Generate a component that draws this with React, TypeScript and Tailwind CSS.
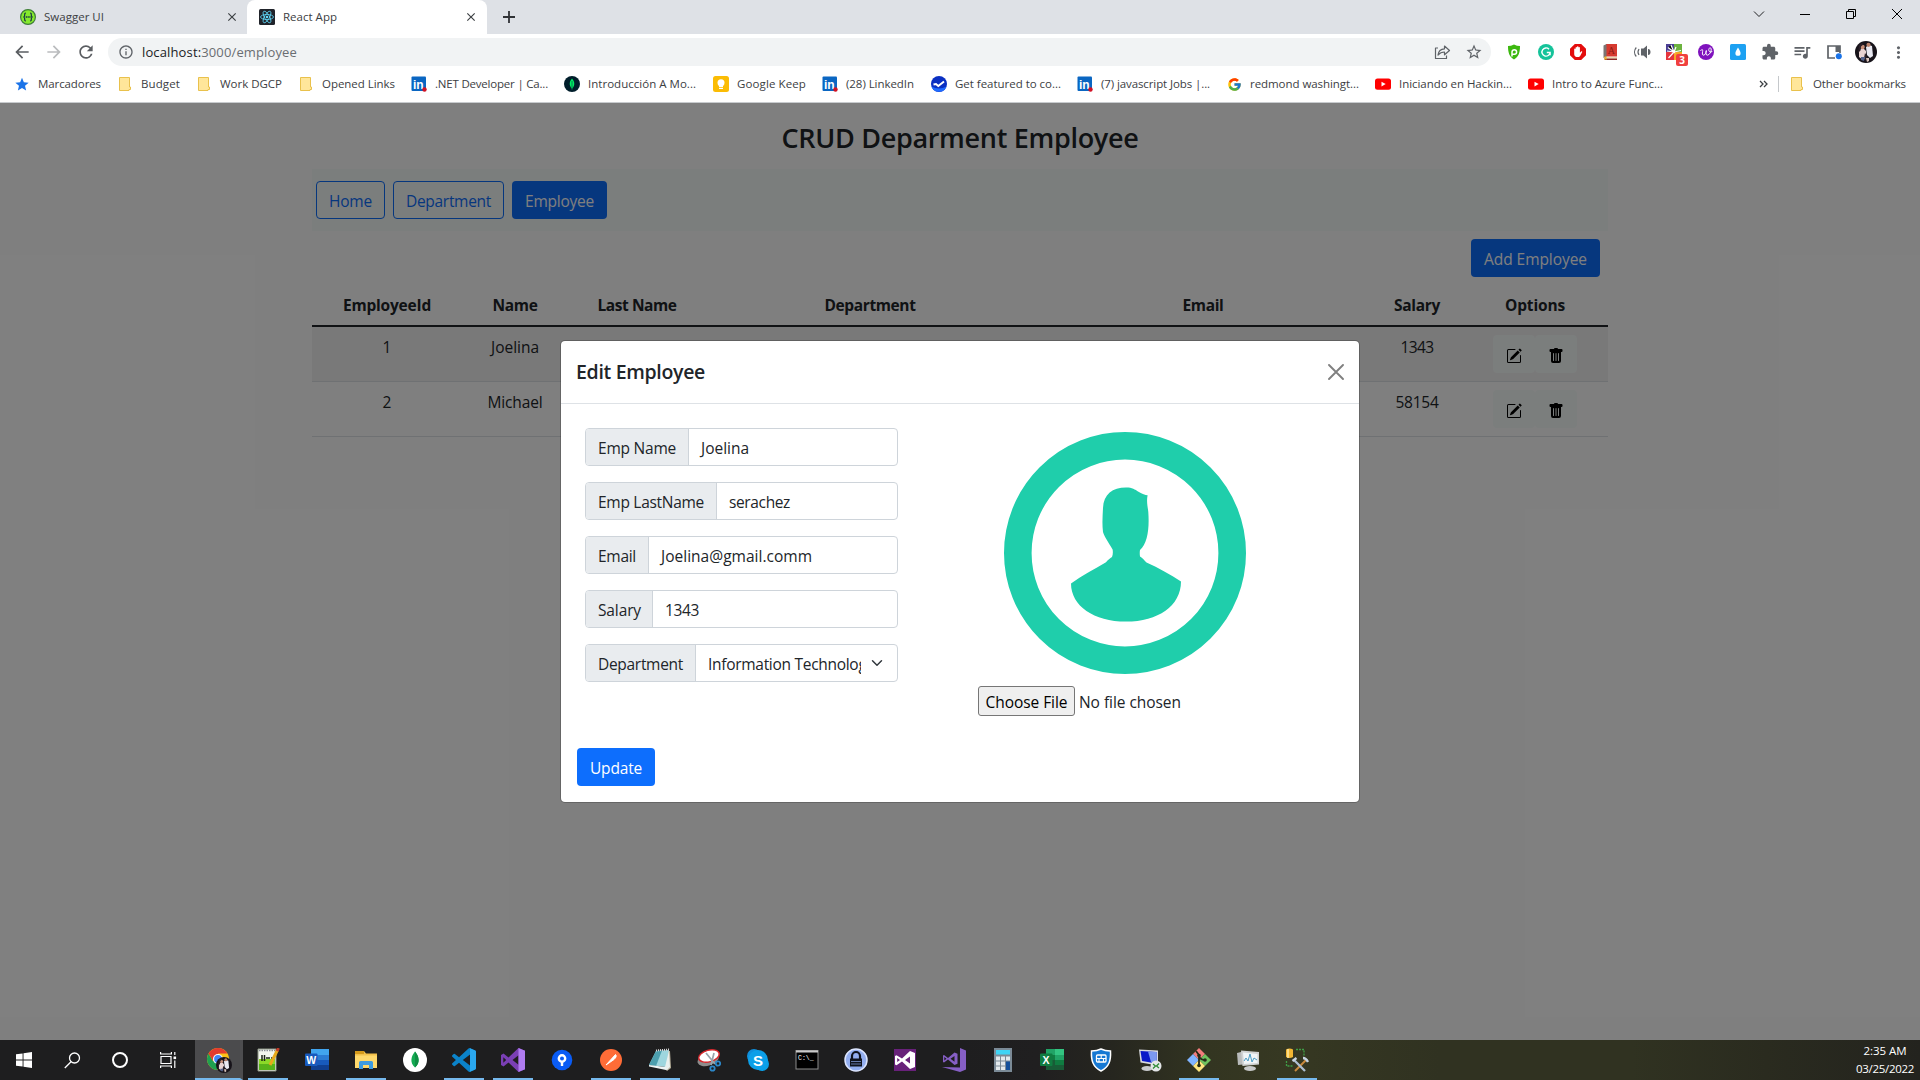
import { useLayoutEffect, useRef } from "react";
import type { ReactNode } from "react";
import { BsPencilSquare, BsTrashFill } from "react-icons/bs";
import { FcGoogle } from "react-icons/fc";
import {
  MdArrowBack,
  MdArrowForward,
  MdClose,
  MdExtension,
  MdInfoOutline,
  MdMoreVert,
  MdQueueMusic,
  MdRefresh,
  MdStar,
  MdStarBorder,
} from "react-icons/md";

/* Text tracked so that its line is exactly w pixels wide. */
function Fit({ w, className = "", children }: { w: number; className?: string; children: ReactNode }) {
  const ref = useRef<HTMLSpanElement>(null);
  useLayoutEffect(() => {
    const el = ref.current;
    if (!el) return;
    el.style.letterSpacing = "0px";
    const natural = el.getBoundingClientRect().width;
    const n = (el.textContent || "").length || 1;
    el.style.letterSpacing = (w - natural) / n + "px";
  }, [w]);
  return (
    <span ref={ref} className={"inline-block whitespace-nowrap " + className}>
      {children}
    </span>
  );
}

/* ---------- browser icons ---------- */

const Folder = () => (
  <svg width="16" height="16" viewBox="0 0 16 16">
    <path d="M2.5 1.5h10v9.5h1v2.500h-1.500v1h-9.500z" fill="#ffe69a" stroke="#e9c14c" />
  </svg>
);

const LinkedIn = () => (
  <svg width="16" height="16" viewBox="0 0 16 16">
    <rect x="0.500" y="0.500" width="14.500" height="14.500" rx="1" fill="#0a66c2" />
    <text x="2" y="12.500" fontSize="12" fontWeight="700" fill="#fff" fontFamily="Liberation Sans, sans-serif">in</text>
    <circle cx="13.500" cy="13.500" r="2.200" fill="#d11124" />
  </svg>
);

const Mongo = () => (
  <svg width="16" height="16" viewBox="0 0 16 16">
    <circle cx="8" cy="8" r="8" fill="#001e2b" />
    <path d="M8 2.500c2.600 3 3.400 6.500 0 10.500c-3.400-4-2.600-7.500 0-10.500z" fill="#00ed64" />
    <path d="M8 5v9" stroke="#00684a" strokeWidth="0.800" />
  </svg>
);

const Keep = () => (
  <svg width="16" height="16" viewBox="0 0 16 16">
    <rect width="16" height="16" rx="2.500" fill="#fbbc04" />
    <circle cx="8" cy="6.800" r="3.500" fill="#fff" />
    <path d="M6 9h4v2H6zM6 11.800h4v1.200H6z" fill="#fff" />
  </svg>
);

const Featured = () => (
  <svg width="16" height="16" viewBox="0 0 16 16">
    <circle cx="8" cy="8" r="8" fill="#0a2fc2" />
    <path d="M0.500 10.500A8 8 0 0 0 15.500 10.500C11 13 5 13 0.500 10.500z" fill="#1f6bff" />
    <path d="M2.500 8.500L5 8l2.300 2L13 5.500" stroke="#fff" strokeWidth="2" fill="none" />
  </svg>
);

const YouTube = () => (
  <svg width="16" height="16" viewBox="0 0 16 16">
    <rect y="2.500" width="16" height="11.200" rx="2.500" fill="#f00" />
    <path d="M6.500 5.700v4.800l4.200-2.400z" fill="#fff" />
  </svg>
);

const ReactLogo = () => (
  <svg width="16" height="16" viewBox="0 0 16 16">
    <rect width="16" height="16" rx="1.500" fill="#20232a" />
    <g fill="none" stroke="#61dafb" strokeWidth="0.800">
      <ellipse cx="8" cy="8" rx="6.500" ry="2.500" />
      <ellipse cx="8" cy="8" rx="6.500" ry="2.500" transform="rotate(60 8 8)" />
      <ellipse cx="8" cy="8" rx="6.500" ry="2.500" transform="rotate(120 8 8)" />
    </g>
    <circle cx="8" cy="8" r="1.300" fill="#61dafb" />
  </svg>
);

const Swagger = () => (
  <svg width="16" height="16" viewBox="0 0 16 16">
    <circle cx="8" cy="8" r="7.400" fill="#85ea2d" stroke="#3f7d3a" strokeWidth="1.200" />
    <path d="M6 4c-1.500 0-1.300 1-1.300 2S4.500 7.800 3.500 8c1 .200 1.200 1 1.200 2S4.500 12 6 12M10 4c1.500 0 1.300 1 1.300 2s.200 1.800 1.200 2c-1 .200-1.200 1-1.200 2s.200 2-1.300 2" fill="none" stroke="#173647" strokeWidth="1.200" />
    <path d="M5.700 8h5" stroke="#173647" strokeWidth="1.400" strokeDasharray="1.300 .5" />
  </svg>
);

const Share = () => (
  <svg width="18" height="18" viewBox="0 0 18 18" fill="none" stroke="#5f6368" strokeWidth="1.200" strokeLinejoin="round">
    <path d="M5 5H2.500v10.500h11v-3" />
    <path d="M5 12c.5-4 2.500-6 6.500-6.200V3l5 4.500l-5 4.300V9c-2.700 0-4.500.700-6.500 3z" />
  </svg>
);

const extensions: ReactNode[] = [
  <svg key="p" width="16" height="16" viewBox="0 0 16 16">
    <path d="M8 .500c2 1 4 1.500 6 1.500c0 6-1 10.500-6 13.500C3 12.500 2 8 2 2C4 2 6 1.500 8 .500z" fill="#3cb80f" />
    <path d="M6 12.500V8a2.300 2.300 0 1 1 2.300 2.300H6" fill="none" stroke="#fff" strokeWidth="1.500" />
  </svg>,
  <svg key="g" width="16" height="16" viewBox="0 0 16 16">
    <circle cx="8" cy="8" r="8" fill="#15c39a" />
    <path d="M11 5.200A4.100 4.100 0 1 0 12.100 8.500H8.800M12.100 8.500v2.700" fill="none" stroke="#fff" strokeWidth="1.400" />
  </svg>,
  <svg key="hand" width="16" height="16" viewBox="0 0 16 16">
    <path d="M4.800 0h6.400L16 4.800v6.400L11.200 16H4.800L0 11.200V4.800z" fill="#e40d0d" />
    <path d="M4.200 8V5.200a.7.700 0 0 1 1.400 0V3.800a.7.700 0 0 1 1.400 0V3a.7.700 0 0 1 1.500 0v.8a.7.700 0 0 1 1.400 0v5l1.200-1.400c.8-.5 1.400.2 1 .9L10 12.200c-1.300 1.500-5.800 1.200-5.800-2z" fill="#fff" />
  </svg>,
  <svg key="book" width="16" height="16" viewBox="0 0 16 16">
    <path d="M4 0h11v12.500H4z" fill="#d63a30" />
    <path d="M1.500 1.500L4.500 0v12.500l-3 1.500z" fill="#7b7472" />
    <path d="M3 13h12v1.500H3z" fill="#e8d9b0" />
    <path d="M2 14.500h13V16H3z" fill="#8d2a25" />
    <text x="5.800" y="9.800" fontSize="10" fill="#8c1a14" fontFamily="Liberation Serif, serif">A</text>
    <path d="M2.500 12.500h2V16l-1-.8-1 .8z" fill="#f0b429" />
  </svg>,
  <svg key="sound" width="18" height="16" viewBox="0 0 18 16">
    <path d="M8 4.500h2.500L14 1.500v13L10.500 11.500H8zM15 5c2 0 2.500 1.500 2.500 3s-.5 3-2.500 3z" fill="#5f6368" />
    <path d="M6 5c-1.200 1.800-1.200 4.200 0 6M3.300 3.500c-2.300 2.600-2.300 6.400 0 9" fill="none" stroke="#5f6368" strokeWidth="1.200" />
  </svg>,
  <span key="tiles" className="relative flex">
    <svg width="16" height="16" viewBox="0 0 16 16">
      <path d="M0 0h8v8H0z" fill="#4b3f94" />
      <path d="M8 0h8v8H8z" fill="#6cb33f" />
      <path d="M0 8h8v8H0z" fill="#e5343d" />
      <path d="M8 8h8v8H8z" fill="#f6a723" />
      <path d="M2 3.500L8 8l-3-7M8 8l2-5M8 8l-5.500 6M8 8l7-1.500M8 8L1 7" stroke="#fff" strokeWidth="1.200" />
    </svg>
    <span className="absolute top-[10px] left-[10px] flex h-3 w-3 items-center justify-center rounded-[2px] bg-[#f0403f] font-['Open_Sans',sans-serif] text-[10px] leading-none font-bold text-white">
      3
    </span>
  </span>,
  <svg key="w" width="16" height="16" viewBox="0 0 16 16">
    <circle cx="8" cy="8" r="8" fill="#7f12bd" />
    <path d="M2.500 7C4 4.500 5 5.500 4.600 7.500S4.200 11.300 5.600 11.200S8 9 8.300 6.500C7.900 9 7.900 11.300 9.300 11.200C11.500 11 13.600 7.500 13.200 5C12.900 3.200 11 3.500 10.800 5.500S12 8.800 14.300 7.500" fill="none" stroke="#fff" strokeWidth="1" />
  </svg>,
  <svg key="drop" width="16" height="16" viewBox="0 0 16 16">
    <rect width="16" height="16" rx="1.500" fill="#1da1f2" />
    <path d="M8 3.500c1.500 2.500 2.600 4 2.600 5.700a2.600 2.600 0 0 1-5.200 0C5.400 7.500 6.500 6 8 3.500z" fill="#fff" />
  </svg>,
  <MdExtension key="ext" size={18} color="#5f6368" />,
  <MdQueueMusic key="music" size={20} color="#5f6368" />,
  <svg key="panel" width="16" height="16" viewBox="0 0 16 16">
    <path d="M9 14H2V2h12v7" fill="none" stroke="#5f6368" strokeWidth="1.700" />
    <path d="M9.500 2h4.500v6H9.500z" fill="#5f6368" />
    <circle cx="12.800" cy="12.300" r="3" fill="#1a73e8" />
  </svg>,
  <Avatar key="avatar" size={22} />,
  <MdMoreVert key="more" size={19} color="#5f6368" />,
];

/* Profile photo reduced to its main masses. */
function Avatar({ size }: { size: number }) {
  return (
    <svg width={size} height={size} viewBox="0 0 22 22">
      <circle cx="11" cy="11" r="11" fill="#17131a" />
      <path d="M11 6l3-2 3 1 1 10-3 2-3-3z" fill="#e9e9f2" />
      <path d="M4 9l4-2 3 3v7l-3 2-4-3z" fill="#e8d3d2" />
      <circle cx="7.500" cy="6" r="2.300" fill="#c98f78" />
      <circle cx="13.500" cy="3.800" r="2.100" fill="#b98069" />
      <path d="M4 5c1-3 3-3.500 5-2L6 5.500l-.5 4L3 12zM10 12l2 3-1 5-2-3z" fill="#2b2028" />
      <path d="M6 16h4l-1 4-3-1z" fill="#53628c" />
      <path d="M11 17l3 0 0 3-2 1z" fill="#d9c3bb" />
    </svg>
  );
}

/* ---------- browser chrome ---------- */

type Bookmark = { icon: ReactNode; label: string; w: number; cell: string };

const bookmarks: Bookmark[] = [
  { icon: <MdStar size={17} color="#1a73e8" />, label: "Marcadores", w: 63, cell: "w-[103px]" },
  { icon: <Folder />, label: "Budget", w: 39, cell: "w-[79px]" },
  { icon: <Folder />, label: "Work DGCP", w: 62, cell: "w-[102px]" },
  { icon: <Folder />, label: "Opened Links", w: 73, cell: "w-[113px]" },
  { icon: <LinkedIn />, label: ".NET Developer | Ca...", w: 113, cell: "w-[153px]" },
  { icon: <Mongo />, label: "Introducción A Mo...", w: 108, cell: "w-[149px]" },
  { icon: <Keep />, label: "Google Keep", w: 69, cell: "w-[109px]" },
  { icon: <LinkedIn />, label: "(28) LinkedIn", w: 68, cell: "w-[109px]" },
  { icon: <Featured />, label: "Get featured to co...", w: 106, cell: "w-[146px]" },
  { icon: <LinkedIn />, label: "(7) javascript Jobs |...", w: 109, cell: "w-[149px]" },
  { icon: <FcGoogle size={15} />, label: "redmond washingt...", w: 109, cell: "w-[149px]" },
  { icon: <YouTube />, label: "Iniciando en Hackin...", w: 113, cell: "w-[153px]" },
  { icon: <YouTube />, label: "Intro to Azure Func...", w: 111, cell: "w-[152px]" },
];

function BookmarkItem({ icon, label, w }: { icon: ReactNode; label: string; w: number }) {
  return (
    <>
      <span className="mr-2 flex w-4 shrink-0 items-center justify-center">{icon}</span>
      <Fit w={w}>{label}</Fit>
    </>
  );
}

function Browser() {
  return (
    <header className="flex h-[103px] shrink-0 flex-col border-b border-[#c8cbce] bg-white text-[11.5px] text-[#3c4043]">
      <div className="flex h-[34px] bg-[#dee1e6]">
        <div className="flex w-[247px] items-center pr-2 pl-5">
          <Swagger />
          <Fit w={60} className="ml-2">Swagger UI</Fit>
          <MdClose size={14} className="ml-auto" />
        </div>
        <div className="flex w-60 items-center rounded-t-lg bg-white pr-[9px] pl-3">
          <ReactLogo />
          <Fit w={54} className="ml-2">React App</Fit>
          <MdClose size={14} className="ml-auto" />
        </div>
        <div className="flex w-11 items-center justify-center">
          <svg width="14" height="14" viewBox="0 0 14 14">
            <path d="M7 1v12M1 7h12" stroke="#303236" strokeWidth="1.800" />
          </svg>
        </div>
        <div className="ml-auto flex h-7 items-center">
          <span className="flex w-[46px] justify-center">
            <svg width="12" height="12" viewBox="0 0 12 12">
              <path d="M1 3.500L6 8.500l5-5" fill="none" stroke="#202124" />
            </svg>
          </span>
          <span className="flex w-[46px] justify-center">
            <span className="h-px w-[10px] bg-black" />
          </span>
          <span className="flex w-[46px] justify-center">
            <svg width="12" height="12" viewBox="0 0 12 12" fill="none" stroke="#000">
              <path d="M1.500 3.500h7v7h-7zM3.500 3.500v-2h7v7h-2" />
            </svg>
          </span>
          <span className="flex w-[46px] justify-center">
            <svg width="12" height="12" viewBox="0 0 12 12" stroke="#000">
              <path d="M1 1l10 10M11 1L1 11" />
            </svg>
          </span>
        </div>
      </div>

      <div className="flex h-9 items-center px-1.5">
        <div className="flex w-8 justify-center"><MdArrowBack size={20} color="#5a5d61" /></div>
        <div className="flex w-8 justify-center"><MdArrowForward size={20} color="#babcbe" /></div>
        <div className="flex w-8 justify-center"><MdRefresh size={20} color="#5a5d61" /></div>
        <div className="ml-1.5 flex h-7 w-[1383px] items-center rounded-full bg-[#f1f3f4] pr-px pl-[10px]">
          <MdInfoOutline size={16} color="#5f6368" />
          <span className="ml-2 pt-px text-[13px] text-[#6a6e72]">
            <Fit w={155}>
              <span className="text-[#202124]">localhost:</span>3000/employee
            </Fit>
          </span>
          <span className="ml-auto flex w-8 justify-center"><Share /></span>
          <span className="flex w-8 justify-center"><MdStarBorder size={18} color="#5f6368" /></span>
        </div>
        <div className="ml-[7px] flex">
          {extensions.map((icon, i) => (
            <div key={i} className="flex w-8 items-center justify-center">{icon}</div>
          ))}
        </div>
      </div>

      <div className="flex h-7 items-center px-[14px]">
        {bookmarks.map((b) => (
          <div key={b.label} className={"flex shrink-0 items-center " + b.cell}>
            <BookmarkItem icon={b.icon} label={b.label} w={b.w} />
          </div>
        ))}
        <div className="ml-auto flex items-center">
          <svg width="9" height="8" viewBox="0 0 9 8" className="mr-[10px]">
            <path d="M1 1l3 3-3 3M5 1l3 3-3 3" fill="none" stroke="#3c4043" strokeWidth="1.300" />
          </svg>
          <span className="mr-[10px] h-4 w-px bg-[#c5c8cb]" />
          <BookmarkItem icon={<Folder />} label="Other bookmarks" w={93} />
        </div>
      </div>
    </header>
  );
}

/* ---------- page behind the dialog ---------- */

const columns = [
  { label: "EmployeeId", w: 88, cell: "w-[150px]" },
  { label: "Name", w: 45, cell: "w-[106px]" },
  { label: "Last Name", w: 79, cell: "w-[138px]" },
  { label: "Department", w: 91, cell: "w-[328px]" },
  { label: "Email", w: 41, cell: "w-[338px]" },
  { label: "Salary", w: 46, cell: "w-[90px]" },
  { label: "Options", w: 60, cell: "w-[146px]" },
];

const employees = [
  { id: "1", name: "Joelina", nameW: 48, salary: "1343", salaryW: 33, row: "bg-[#f2f2f2]" },
  { id: "2", name: "Michael", nameW: 55, salary: "58154", salaryW: 43, row: "bg-white" },
];

function EmployeePage() {
  return (
    <div className="mx-auto flex w-[1296px] flex-col text-[15.5px] leading-6 text-[#212529]">
      <h3 className="flex h-[66px] items-center justify-center pt-0.5 text-[27px] leading-none font-semibold">
        <Fit w={357}>CRUD Deparment Employee</Fit>
      </h3>
      <nav className="flex h-[62px] items-center gap-2 bg-[#f7fcfa] px-1">
        <a className="flex h-[38px] w-[69px] items-center justify-center rounded border border-[#0d6efd] pt-px text-[#0d6efd]">
          <Fit w={43}>Home</Fit>
        </a>
        <a className="flex h-[38px] w-[111px] items-center justify-center rounded border border-[#0d6efd] pt-px text-[#0d6efd]">
          <Fit w={85}>Department</Fit>
        </a>
        <a className="flex h-[38px] w-[95px] items-center justify-center rounded bg-[#0d6efd] pt-px text-white">
          <Fit w={69}>Employee</Fit>
        </a>
      </nav>
      <div className="flex h-[53px] justify-end px-2 pt-2">
        <button className="flex h-[38px] w-[129px] items-center justify-center rounded bg-[#0d6efd] pt-px text-white">
          <Fit w={103}>Add Employee</Fit>
        </button>
      </div>
      <table className="table-fixed border-collapse text-center">
        <thead>
          <tr className="h-[42px] border-b-2 border-[#212529] font-bold">
            {columns.map((c) => (
              <th key={c.label} className={"p-0 " + c.cell}>
                <Fit w={c.w}>{c.label}</Fit>
              </th>
            ))}
          </tr>
        </thead>
        <tbody>
          {employees.map((e) => (
            <tr key={e.id} className={"h-[55px] border-b border-[#dee2e6] align-top " + e.row}>
              <td className="pt-2">{e.id}</td>
              <td className="pt-2"><Fit w={e.nameW}>{e.name}</Fit></td>
              <td />
              <td />
              <td />
              <td className="pt-2"><Fit w={e.salaryW}>{e.salary}</Fit></td>
              <td className="pt-2">
                <div className="flex justify-center">
                  <button className="flex h-[38px] w-[42px] items-center justify-center rounded bg-[#f7fcfa] pt-1 text-black">
                    <BsPencilSquare size={16} />
                  </button>
                  <button className="flex h-[38px] w-[42px] items-center justify-center rounded bg-[#f7fcfa] pt-1 text-black">
                    <BsTrashFill size={16} />
                  </button>
                </div>
              </td>
            </tr>
          ))}
        </tbody>
      </table>
    </div>
  );
}

/* ---------- dialog ---------- */

const fields = [
  { label: "Emp Name", lw: 78, box: "w-[103px]", value: "Joelina", vw: 48 },
  { label: "Emp LastName", lw: 106, box: "w-[131px]", value: "serachez", vw: 61 },
  { label: "Email", lw: 38, box: "w-[63px]", value: "Joelina@gmail.comm", vw: 151 },
  { label: "Salary", lw: 43, box: "w-[67px]", value: "1343", vw: 34 },
];

function Person() {
  return (
    <svg width="242" height="242" viewBox="0 0 242 242" className="ml-[26px]">
      <circle cx="121" cy="121" r="107.200" fill="none" stroke="#1fceab" strokeWidth="27.600" />
      <path
        d="M122.500 55.500C128 55.500 131 57.500 134.500 59.700C138.500 62 141 63 143.600 63.300C142.300 70 143.700 74 144.300 80C145.500 97 143.500 111 136 118C135.600 120 135.700 122.500 136 124.500C138.500 126 140.500 128.500 142.500 130.500C155 136 166 142.500 177 149.500C177 174 154 189.600 122 189.600C90 189.600 67 174 67 151.500C78 143.500 90 137.500 102 130.300C104 127.500 106 126.500 108 125C109 122.500 109 119.500 108.600 117.500C104 109.500 100 104 99 100C98 92 98.600 84 99 76C99.500 62 109 55.300 122.500 55.500Z"
        fill="#1fceab"
      />
    </svg>
  );
}

function EditDialog() {
  return (
    <section className="flex h-[463px] w-[800px] flex-col rounded-[5px] border border-black/20 bg-white bg-clip-padding text-[15.5px] leading-6 text-[#212529]">
      <div className="flex h-[63px] shrink-0 items-center justify-between border-b border-[#dee2e6] px-[15px]">
        <h5 className="text-[19.5px] leading-none font-semibold">
          <Fit w={129}>Edit Employee</Fit>
        </h5>
        <svg width="16" height="16" viewBox="0 0 16 16" className="text-[#808080]">
          <path d="M1 1l14 14M15 1L1 15" stroke="currentColor" strokeWidth="1.900" strokeLinecap="round" />
        </svg>
      </div>
      <div className="flex h-[344px] shrink-0 px-6 pt-6">
        <div className="flex w-[313px] flex-col gap-4">
          {fields.map((f) => (
            <div key={f.label} className="flex h-[38px] overflow-hidden rounded border border-[#ced4da]">
              <div className={"flex shrink-0 items-center border-r border-[#ced4da] bg-[#e9ecef] pt-px pl-3 " + f.box}>
                <Fit w={f.lw}>{f.label}</Fit>
              </div>
              <div className="flex items-center pt-px pl-3"><Fit w={f.vw}>{f.value}</Fit></div>
            </div>
          ))}
          <div className="flex h-[38px] overflow-hidden rounded border border-[#ced4da]">
            <div className="flex w-[110px] shrink-0 items-center border-r border-[#ced4da] bg-[#e9ecef] pt-px pl-3">
              <Fit w={85}>Department</Fit>
            </div>
            <div className="ml-3 flex w-[153px] items-center overflow-hidden pt-px">
              <Fit w={166}>Information Technology</Fit>
            </div>
            <svg width="12" height="12" viewBox="0 0 16 16" className="my-auto ml-[10px]">
              <path d="M2 5l6 6 6-6" fill="none" stroke="#343a40" strokeWidth="2" strokeLinecap="round" strokeLinejoin="round" />
            </svg>
          </div>
        </div>
        <div className="ml-[80px] flex flex-col pt-1">
          <Person />
          <div className="mt-3 flex items-center">
            <button className="flex h-[30px] w-[97px] items-center justify-center rounded-[3px] border border-[#767676] bg-[#efefef] pt-px text-black">
              <Fit w={82}>Choose File</Fit>
            </button>
            <Fit w={102} className="ml-1 pt-px">No file chosen</Fit>
          </div>
        </div>
      </div>
      <div className="flex px-4">
        <button className="flex h-[38px] w-[78px] items-center justify-center rounded bg-[#0d6efd] pt-px text-white">
          <Fit w={52}>Update</Fit>
        </button>
      </div>
    </section>
  );
}

/* ---------- taskbar ---------- */

const VsCode = () => (
  <svg width="24" height="24" viewBox="0 0 24 24">
    <path
      d="M23.15 2.587L18.21.21a1.494 1.494 0 0 0-1.705.29l-9.46 8.63-4.12-3.128a.999.999 0 0 0-1.276.057L.327 7.261A1 1 0 0 0 .326 8.74L3.899 12 .326 15.26a1 1 0 0 0 .001 1.479L1.65 17.94a.999.999 0 0 0 1.276.057l4.12-3.128 9.46 8.63a1.492 1.492 0 0 0 1.704.29l4.942-2.377A1.5 1.5 0 0 0 24 20.06V3.939a1.5 1.5 0 0 0-.85-1.352zm-5.146 14.861L10.826 12l7.178-5.448v10.896z"
      fill="#0b83c9"
    />
    <path d="M18 .2l5.200 2.400A1.500 1.500 0 0 1 24 4v16a1.500 1.500 0 0 1-.8 1.400L18 23.800z" fill="#2aa8ef" />
  </svg>
);

const Vs2022 = () => (
  <svg width="24" height="24" viewBox="0 0 24 24">
    <path d="M17.500 0L24 2.700v18.600L17.500 24L7.500 14.500L2.500 18.500L0 17V7l2.500-1.500l5 4zM17.500 7.200L11.500 12l6 4.800zM2.300 9.200v5.600L5.200 12z" fill="#7a3fb5" fillRule="evenodd" />
    <path d="M17.500 0L24 2.700v18.600L17.500 24z" fill="#b07cf0" />
  </svg>
);

type Task = { key: string; open?: boolean; icon: ReactNode };

const tasks: Task[] = [
  {
    key: "notepadpp",
    open: true,
    icon: (
      <svg width="24" height="24" viewBox="0 0 24 24">
        <path d="M2 1h18v22H2z" fill="#f3f6ee" stroke="#8b9484" />
        <path d="M3 11h16v11H3z" fill="#8bd928" />
        <path d="M3 16h16v6H3z" fill="#57b21a" />
        <path d="M3 2.500h16" stroke="#8a8f96" strokeWidth="1.500" strokeDasharray="1.500 1" />
        <path d="M6 7v6M8.500 7v6M10 10h4M15 10h2" stroke="#1c2517" strokeWidth="1.500" />
        <path d="M21.500 2L14 17" stroke="#e8a91c" strokeWidth="3" />
        <path d="M22.500 0L21 3" stroke="#c03d2a" strokeWidth="3" />
      </svg>
    ),
  },
  {
    key: "word",
    icon: (
      <svg width="24" height="24" viewBox="0 0 24 24">
        <path d="M6 1h18v6H6z" fill="#41a5ee" />
        <path d="M6 7h18v5H6z" fill="#2b7cd3" />
        <path d="M6 12h18v5H6z" fill="#185abd" />
        <path d="M6 17h18v5H6z" fill="#103f91" />
        <rect y="5.500" width="12.500" height="12.500" rx="1" fill="#185abd" />
        <text x="1.200" y="15.500" fontSize="10.500" fontWeight="700" fill="#fff" fontFamily="Liberation Sans, sans-serif">W</text>
      </svg>
    ),
  },
  {
    key: "explorer",
    open: true,
    icon: (
      <svg width="24" height="24" viewBox="0 0 24 24">
        <path d="M1 3h9l2 2.500h11V20H1z" fill="#f3c14b" />
        <path d="M1 3h9v3H1z" fill="#d59a1b" />
        <path d="M1 7.500h22V20H1z" fill="#ffd96c" />
        <path d="M5 21v-6.500q0-1.500 1.500-1.500h11q1.500 0 1.500 1.500V21h-4v-4H9v4z" fill="#3d9be0" />
      </svg>
    ),
  },
  {
    key: "compass",
    icon: (
      <svg width="24" height="24" viewBox="0 0 24 24">
        <circle cx="12" cy="12" r="12" fill="#fff" />
        <path d="M12 3.500c3.500 4 6 11 0 16c-6-5-3.500-12 0-16z" fill="#13aa52" />
        <path d="M12 3.500c3.500 4 6 11 0 16z" fill="#0f8e44" />
      </svg>
    ),
  },
  { key: "vscode", open: true, icon: <VsCode /> },
  { key: "vs2022", open: true, icon: <Vs2022 /> },
  {
    key: "fork",
    icon: (
      <svg width="24" height="24" viewBox="0 0 24 24">
        <circle cx="12" cy="12" r="10.300" fill="#0a5cf5" />
        <circle cx="12" cy="10.500" r="3.200" fill="none" stroke="#fff" strokeWidth="2.400" />
        <path d="M12 13v5" stroke="#fff" strokeWidth="2.400" />
      </svg>
    ),
  },
  {
    key: "postman",
    open: true,
    icon: (
      <svg width="24" height="24" viewBox="0 0 24 24">
        <circle cx="12" cy="12" r="11" fill="#ff6c37" />
        <path d="M16.500 6.500L7 17l8-5.500c2-2 3-3.500 1.500-5z" fill="#fff" stroke="#fff" />
      </svg>
    ),
  },
  {
    key: "notepad",
    open: true,
    icon: (
      <svg width="24" height="24" viewBox="0 0 24 24">
        <path d="M8 3h14l1 17-4 3z" fill="#b8b19c" />
        <path d="M8 3L21 2L18 19L1 17z" fill="#9ed6de" />
        <path d="M8 3l6-.5L8 18l-7-1z" fill="#4c9fae" />
        <path d="M21 2.500L22 19l-3.500 3.500L17 19z" fill="#e9f0ee" />
        <path d="M1 17l17 2v3L1 18.500z" fill="#eef4f4" />
        <path d="M8 2.500L21 1.500" stroke="#ddd" strokeWidth="2" strokeDasharray="1 1" />
      </svg>
    ),
  },
  {
    key: "snip",
    icon: (
      <svg width="24" height="24" viewBox="0 0 24 24">
        <ellipse cx="11" cy="11.500" rx="11" ry="6" fill="#8d8d8d" transform="rotate(-18 11 11)" />
        <ellipse cx="12" cy="8" rx="10.500" ry="5.800" fill="#fff" stroke="#d8262b" strokeWidth="1.500" transform="rotate(-15 12 8)" />
        <path d="M9 5l9 11M17 5l-3 12" stroke="#9aa3aa" strokeWidth="1.700" />
        <circle cx="21" cy="15.500" r="2.200" fill="none" stroke="#2c87c8" strokeWidth="1.800" />
        <circle cx="15.500" cy="20.500" r="2.200" fill="none" stroke="#2c87c8" strokeWidth="1.800" />
      </svg>
    ),
  },
  {
    key: "skype",
    icon: (
      <svg width="24" height="24" viewBox="0 0 24 24">
        <circle cx="8" cy="8" r="7" fill="#0f8fdc" />
        <circle cx="16" cy="16" r="7" fill="#0a9fe6" />
        <circle cx="12" cy="12" r="10" fill="#0c9fe8" />
        <text x="7" y="17.500" fontSize="15" fontWeight="700" fill="#fff" fontFamily="Liberation Sans, sans-serif">S</text>
      </svg>
    ),
  },
  {
    key: "cmd",
    icon: (
      <svg width="24" height="24" viewBox="0 0 24 24">
        <rect x="1" y="2.500" width="22" height="18.500" fill="#000" stroke="#8c8c8c" />
        <path d="M1 3.500h22" stroke="#c9c9c9" strokeWidth="2" />
        <text x="3" y="11.500" fontSize="6.500" fill="#fff" fontFamily="Liberation Mono, monospace">C:\_</text>
      </svg>
    ),
  },
  {
    key: "keepass",
    icon: (
      <svg width="24" height="24" viewBox="0 0 24 24">
        <circle cx="12" cy="12" r="11" fill="#93aef0" stroke="#dde6ff" strokeWidth="1.500" />
        <path d="M8 11V8a4 4 0 0 1 8 0v3" fill="none" stroke="#10131c" strokeWidth="2.200" />
        <rect x="6" y="10.500" width="12" height="8" fill="#10131c" />
        <path d="M7 13.500h10M7 16h10" stroke="#7b93cf" strokeWidth="0.800" />
      </svg>
    ),
  },
  {
    key: "vs2012",
    icon: (
      <svg width="24" height="24" viewBox="0 0 24 24">
        <rect x="1" y="1" width="22" height="22" fill="#68217a" />
        <path d="M2 8l1.500-.8L9 10.500L17 3l5 2v14l-5 2l-8-7.500l-5.500 3.800L2 16.500zM17 8.500L12 12l5 3.500zM4.200 10v4L7 12z" fill="#fff" fillRule="evenodd" />
      </svg>
    ),
  },
  {
    key: "vs2017",
    icon: (
      <svg width="24" height="24" viewBox="0 0 24 24">
        <path d="M18 0l6 2.500v19L18 24L0 19l18 .5z" fill="#865fc5" />
        <path d="M1 7.500l1-.5l4 3l6.500-5.500l3 1.200v10l-3 1.200L6 11.500l-4 3l-1-.6zM12.500 8L8.500 10.800l4 2.900zM2.300 9v3.500L4.500 10.800z" fill="#865fc5" fillRule="evenodd" />
      </svg>
    ),
  },
  {
    key: "calc",
    icon: (
      <svg width="24" height="24" viewBox="0 0 24 24">
        <rect x="3" width="18" height="24" fill="#7b8a96" />
        <rect x="5" y="2" width="14" height="4.500" fill="#3fd4f5" />
        <path d="M5 8.500h4v4H5zM10 8.500h4v4h-4zM15 8.500h4v4h-4zM5 13.500h4v4H5zM10 13.500h4v4h-4zM5 18.500h4v3.500H5zM10 18.500h4v3.500h-4z" fill="#e3e9ed" />
        <path d="M15 13.500h4V22h-4z" fill="#14509b" />
      </svg>
    ),
  },
  {
    key: "excel",
    icon: (
      <svg width="24" height="24" viewBox="0 0 24 24">
        <path d="M6 1h9v6H6z" fill="#21a366" />
        <path d="M15 1h9v6h-9z" fill="#33c481" />
        <path d="M6 7h9v5H6z" fill="#107c41" />
        <path d="M15 7h9v5h-9z" fill="#21a366" />
        <path d="M6 12h9v10H6z" fill="#185c37" />
        <path d="M15 12h9v5h-9z" fill="#107c41" />
        <path d="M15 17h9v5h-9z" fill="#185c37" />
        <rect y="5.500" width="12.500" height="12.500" rx="1" fill="#107c41" />
        <text x="2.600" y="15.700" fontSize="10.500" fontWeight="700" fill="#fff" fontFamily="Liberation Sans, sans-serif">X</text>
      </svg>
    ),
  },
  {
    key: "shield",
    icon: (
      <svg width="24" height="24" viewBox="0 0 24 24">
        <path d="M12 1c3 1.500 6 2 9.500 2c.5 9-1 15.500-9.500 20C3.500 18.500 2 12 2.500 3C6 3 9 2.500 12 1z" fill="#1578d3" stroke="#fff" strokeWidth="1.500" />
        <rect x="7.500" y="7" width="9.500" height="7" rx="1" fill="none" stroke="#fff" strokeWidth="1.300" />
        <path d="M12.200 7v3.500M10 10.500V14M14.500 10.500V14M7.500 10.500H17" stroke="#fff" strokeWidth="1.100" />
      </svg>
    ),
  },
  {
    key: "rdp",
    icon: (
      <svg width="24" height="24" viewBox="0 0 24 24">
        <path d="M1 1.500L20 2.500v15L2.500 14.500z" fill="#d8dadd" />
        <path d="M2.500 3L18.500 4v11.500L4 13z" fill="#0a19c8" />
        <path d="M10 3.500l8.500.5v11.500L13 14z" fill="#7b98f0" />
        <ellipse cx="9" cy="20.500" rx="5.500" ry="2.500" fill="#c9cbce" />
        <circle cx="18" cy="18" r="5.500" fill="#e4e6e8" />
        <path d="M15 16l2.500 2-2.500 2.500M21 15.500L18.500 18l2.500 2" fill="none" stroke="#2d8b35" strokeWidth="1.300" />
      </svg>
    ),
  },
  {
    key: "git",
    open: true,
    icon: (
      <svg width="24" height="24" viewBox="0 0 24 24">
        <path d="M12 0l6 6-6 6-6-6z" fill="#f37c7c" />
        <path d="M6 6l6 6-6 6-6-6z" fill="#80b3ff" />
        <path d="M18 6l6 6-6 6-6-6z" fill="#6fc25f" />
        <path d="M12 12l6 6-6 6-6-6z" fill="#ffe680" />
        <path d="M9 3l3 4v11M12 8c1 3 3 4 6 4" fill="none" stroke="#252b18" strokeWidth="1.800" />
        <circle cx="12" cy="7.500" r="1.800" fill="#252b18" />
        <circle cx="18" cy="12" r="1.800" fill="#252b18" />
        <circle cx="12" cy="17.500" r="1.800" fill="#252b18" />
      </svg>
    ),
  },
  {
    key: "perfmon",
    icon: (
      <svg width="24" height="24" viewBox="0 0 24 24">
        <path d="M1 5l6-1.500v13L2 17z" fill="#b9bbbb" />
        <path d="M5 2.500L23 4v12.500L6.500 18z" fill="#d0d2d2" />
        <path d="M7 4.500L21.500 6v9L8 16z" fill="#f0f5f7" />
        <path d="M8 13l2-3 2 3 2-7 2 8 2-4 3 2" fill="none" stroke="#4a9cc4" strokeWidth="1" />
        <ellipse cx="14" cy="20.500" rx="6" ry="2.500" fill="#c7c9c9" />
      </svg>
    ),
  },
  {
    key: "ssms",
    open: true,
    icon: (
      <svg width="24" height="24" viewBox="0 0 24 24">
        <path d="M1 1.500Q4.500-.5 8 1.500V9q-3.500 2-7 0z" fill="#f2b632" />
        <path d="M3 1v9" stroke="#ffe9a3" strokeWidth="1.500" />
        <path d="M11 1.500h8V8M1.500 13v5h7" fill="none" stroke="#3f9d46" strokeWidth="1.300" strokeDasharray="2 1" />
        <path d="M21 12L10 23" stroke="#c98a3d" strokeWidth="2" />
        <path d="M9 12l11 11" stroke="#aebfd2" strokeWidth="2.300" />
        <path d="M7.500 13l4-3M18 10q3 0 5 4" stroke="#c8d4e2" strokeWidth="2.300" fill="none" />
      </svg>
    ),
  },
];

function Taskbar() {
  return (
    <footer className="flex h-10 shrink-0 bg-[linear-gradient(90deg,#1e1e1f_0%,#1e1e1f_50%,#201f20_54%,#26261f_58%,#333521_63%,#363822_67%,#303221_75%,#303221_85%,#2a2b1f_92%,#23231e_100%)] text-white">
      <div className="flex w-12 items-center justify-center">
        <svg width="16" height="16" viewBox="0 0 16 16" fill="#fff">
          <path d="M0 2.300L6.600 1.400v6.100H0zM7.500 1.200L16 0v7.500H7.500zM0 8.400h6.600v6.200L0 13.700zM7.500 8.400H16V16L7.500 14.800z" />
        </svg>
      </div>
      <div className="flex w-12 items-center justify-center">
        <svg width="17" height="17" viewBox="0 0 17 17" fill="none" stroke="#fff" strokeWidth="1.300">
          <circle cx="10.500" cy="6" r="5" />
          <path d="M7 9.800L.8 16" />
        </svg>
      </div>
      <div className="flex w-12 items-center justify-center">
        <span className="h-4 w-4 rounded-full border-2 border-white" />
      </div>
      <div className="flex w-12 items-center justify-center">
        <svg width="17" height="16" viewBox="0 0 17 16" fill="none" stroke="#fff" strokeWidth="1.200">
          <path d="M1 4.500h10v7H1zM.6 0v2h10.800V0M.6 16v-2h10.800v2M14.800 0v3M14.800 8.500V16" />
          <path d="M13.500 4.500h2.600v2.600h-2.600z" fill="#fff" stroke="none" />
        </svg>
      </div>
      <div className="ml-[3px] flex h-10 w-12 items-center justify-center border-r-[3px] border-b-2 border-[#4d4d4f] border-b-[#76b9ed] bg-[#4b4b4d]">
        <svg width="26" height="26" viewBox="0 0 26 26" className="mt-0.5 ml-0.5">
          <circle cx="12" cy="12" r="11" fill="#fbc116" />
          <path d="M12 12L2.500 6.500A11 11 0 0 1 21.500 6.500H12z" fill="#e33b2e" />
          <path d="M2.500 6.500A11 11 0 0 0 11 23l4-7-8-2z" fill="#1fa050" />
          <path d="M2.500 6.500L7 14l3-7z" fill="#e33b2e" />
          <circle cx="12" cy="12" r="5" fill="#fff" />
          <circle cx="12" cy="12" r="3.900" fill="#4285f4" />
          <svg x="10" y="10" width="16" height="16"><Avatar size={16} /></svg>
        </svg>
      </div>
      {tasks.map((t) => (
        <div key={t.key} className="flex w-[49px] items-center justify-center">
          <div
            className={
              t.open
                ? "flex h-10 w-10 items-center justify-center border-y-2 border-t-transparent border-b-[#76b9ed]"
                : "flex h-10 w-10 items-center justify-center"
            }
          >
            {t.icon}
          </div>
        </div>
      ))}
      <div className="ml-auto flex w-[70px] flex-col items-center pt-[2px] text-[11.5px] leading-[18px]">
        <Fit w={43}>2:35 AM</Fit>
        <Fit w={58}>03/25/2022</Fit>
      </div>
    </footer>
  );
}

export default function App() {
  return (
    <div className="flex h-[1080px] w-[1920px] flex-col overflow-hidden bg-white font-['Open_Sans','Noto_Sans',sans-serif]">
      <Browser />
      <main className="relative flex-1 bg-white">
        <EmployeePage />
        <div className="absolute inset-0 flex items-start justify-center bg-black/50 pt-[237px]">
          <EditDialog />
        </div>
      </main>
      <Taskbar />
    </div>
  );
}
